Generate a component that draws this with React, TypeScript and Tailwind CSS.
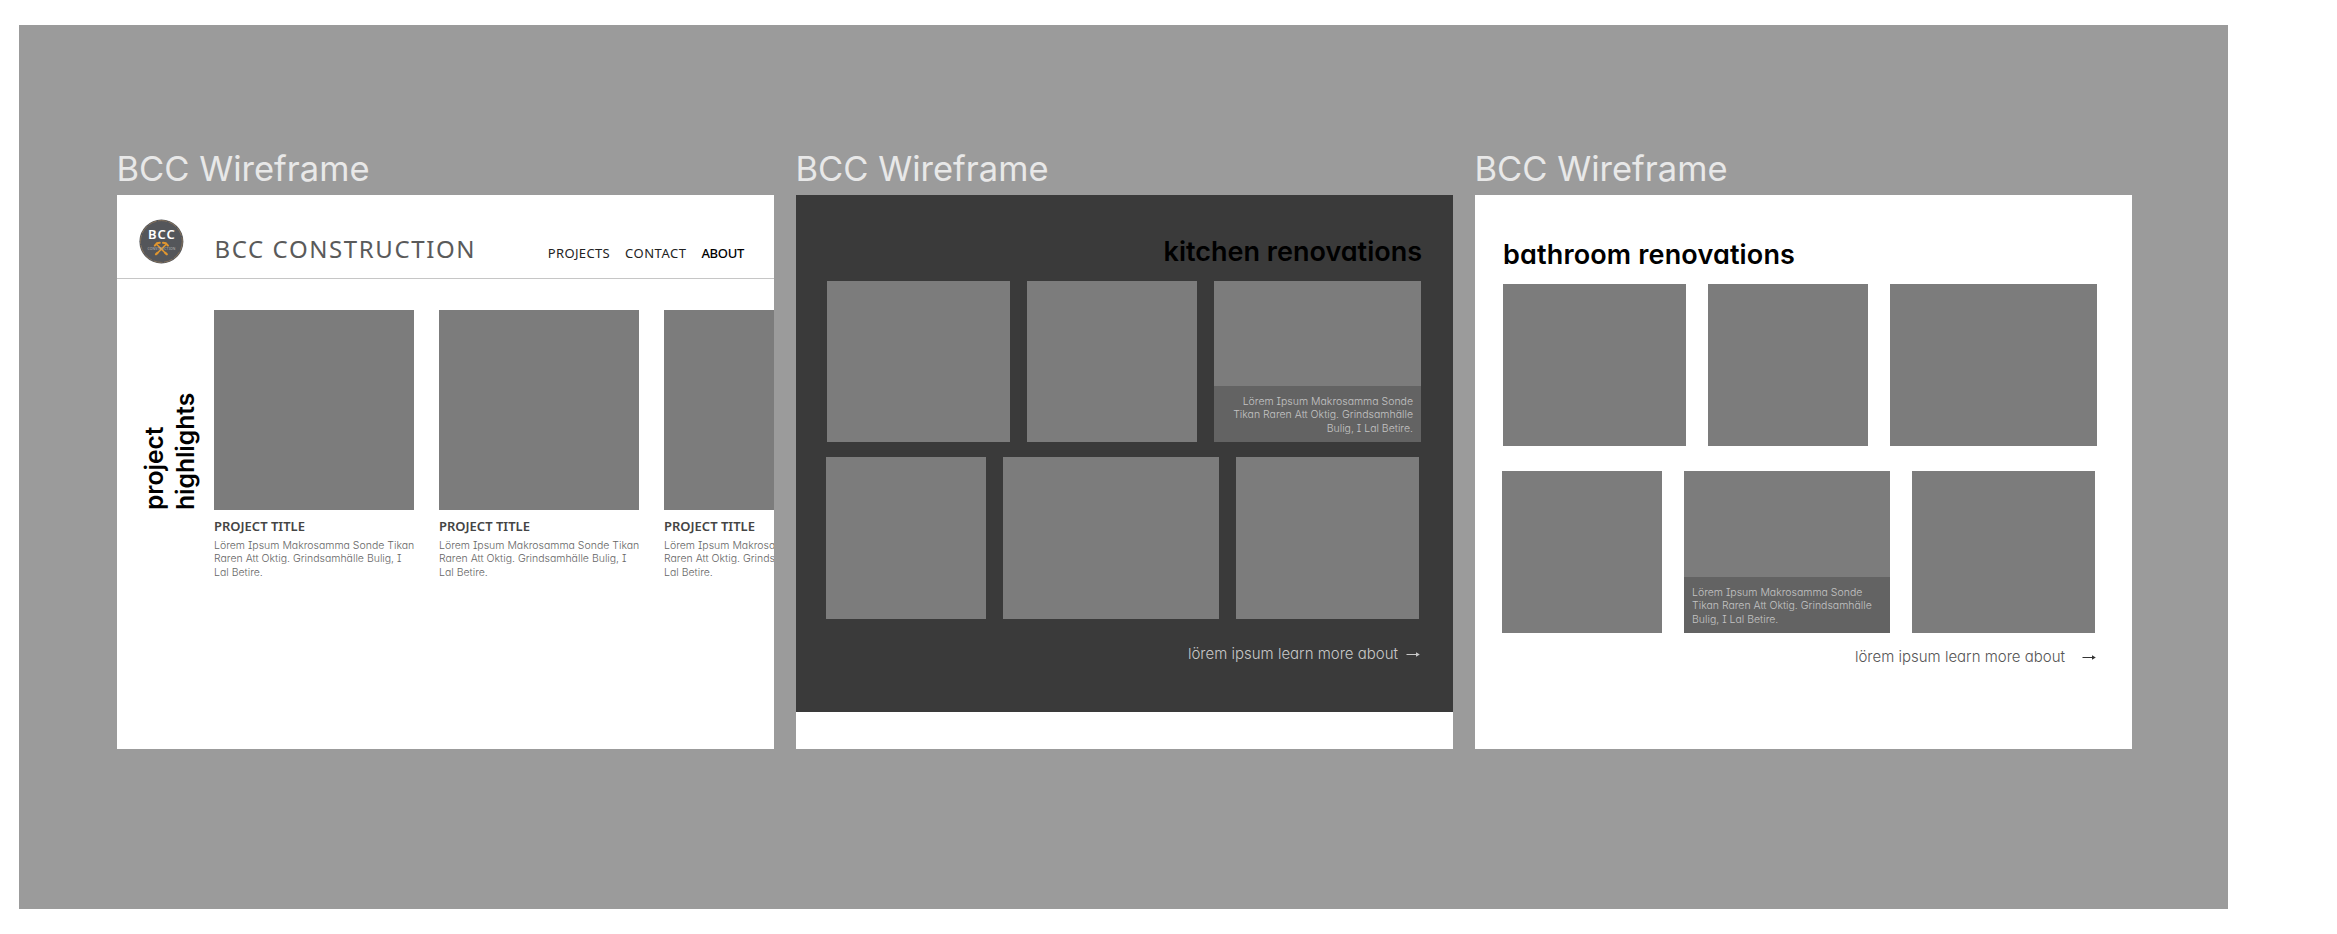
import type { ReactNode } from "react";

const LEXEND = "font-['Inter',sans-serif] [font-feature-settings:'cv11','cv08']";
const BODY = `${LEXEND} text-[10.5px] leading-[13.3px] font-light`;

function Frame({ children }: { children: ReactNode }) {
  return (
    <section className="flex w-[657px] flex-col">
      <h2 className="-ml-[0.5px] h-12 font-['Inter',sans-serif] text-[34.5px] leading-[44px] whitespace-nowrap text-[#e8e8e8]">
        BCC Wireframe
      </h2>
      <div className="flex h-[554px] flex-col overflow-hidden bg-white">{children}</div>
    </section>
  );
}

function Logo() {
  return (
    <svg className="mt-6 ml-[22px] h-[45px] w-[45px] shrink-0" viewBox="0 0 45 45">
      <circle cx="22.4" cy="22.5" r="22" fill="#54565a" />
      <circle cx="22.4" cy="22.5" r="20.9" fill="none" stroke="#86725a" strokeWidth="1" strokeDasharray="9 1.5" />
      <text x="22.4" y="20" textAnchor="middle" textLength="27" fill="#fff" className="font-['Noto_Sans',sans-serif] text-[13px] font-semibold">
        BCC
      </text>
      <g stroke="#e0962f" strokeLinecap="round" fill="none">
        <path d="M18 34.5 27 25.5M26.8 34.5 17.8 25.5" strokeWidth="1.7" />
        <path d="M15.8 26.6 18 24.2 20.8 23.8M29 26.6 26.8 24.2 24 23.8" strokeWidth="2" />
        <path d="M17 35.3 18.6 33.8M27.8 35.3 26.2 33.8" strokeWidth="2.2" />
      </g>
      <text x="22.4" y="31.3" textAnchor="middle" textLength="28" fill="#b9b9b9" className="font-['Noto_Sans',sans-serif] text-[3.4px]">
        CONSTRUCTION
      </text>
    </svg>
  );
}

function Header() {
  return (
    <header className="flex h-[84px] shrink-0 border-b border-[#c6c6c6]">
      <Logo />
      <h1 className="mt-[38px] ml-[30.5px] font-['Noto_Sans',sans-serif] text-[24px] leading-8 tracking-[1.6px] whitespace-nowrap text-[#5a5a5a]">
        BCC CONSTRUCTION
      </h1>
      <nav className="mt-12 mr-[30px] ml-auto flex gap-[15px] font-['Noto_Sans',sans-serif] text-[13px] leading-5 text-[#222]">
        <span className="tracking-[0.35px]">PROJECTS</span>
        <span className="tracking-[0.5px]">CONTACT</span>
        <span className="font-medium tracking-[-0.3px] text-black">ABOUT</span>
      </nav>
    </header>
  );
}

function Project() {
  return (
    <article className="w-[200px] shrink-0">
      <div className="h-[200px] bg-[#7c7c7c]" />
      <h4 className="mt-1.5 font-['Noto_Sans',sans-serif] text-[13px] leading-5 font-semibold text-[#444]">PROJECT TITLE</h4>
      <p className={`${BODY} mt-[3px] whitespace-nowrap text-[#666]`}>
        Lörem Ipsum Makrosamma Sonde Tikan
        <br />
        Raren Att Oktig. Grindsamhälle Bulig, I
        <br />
        Lal Betire.
      </p>
    </article>
  );
}

function Caption({ className }: { className: string }) {
  return (
    <p className={`${BODY} h-14 bg-[#636363] pt-[9px] whitespace-nowrap text-[#c4c4c4] ${className}`}>
      Lörem Ipsum Makrosamma Sonde
      <br />
      Tikan Raren Att Oktig. Grindsamhälle
      <br />
      Bulig, I Lal Betire.
    </p>
  );
}

function Tile({ className, children }: { className: string; children?: ReactNode }) {
  return <div className={`flex shrink-0 flex-col justify-end bg-[#7c7c7c] ${className}`}>{children}</div>;
}

function Arrow({ className }: { className: string }) {
  return (
    <svg className={`h-2 w-[14px] ${className}`} viewBox="0 0 14 8" fill="none" stroke="currentColor">
      <path d="M0.5 4.5H12.5" />
      <path d="M10 2.2 13.8 4.5 10 6.8Z" fill="currentColor" stroke="none" />
    </svg>
  );
}

export default function App() {
  return (
    <div className="h-[934px] overflow-hidden bg-white pt-[25px] pl-[19px]">
      <main className="flex h-[884px] w-[2209px] gap-[22px] bg-[#9b9b9b] pt-[122px] pl-[98px]">
        <Frame>
          <Header />
          <div className="flex pt-[31px]">
            <div className="flex h-[200px] w-[97px] shrink-0 justify-end pr-[14px]">
              <h3 className={`${LEXEND} rotate-180 text-[24.6px] leading-[30.5px] font-semibold whitespace-nowrap text-black [writing-mode:vertical-rl]`}>
                project
                <br />
                highlights
              </h3>
            </div>
            <div className="flex gap-[25px]">
              <Project />
              <Project />
              <Project />
            </div>
          </div>
        </Frame>

        <Frame>
          <div className="h-[517px] bg-[#3a3a3a] pt-[38px] pr-[33px] pl-[30px]">
            <h3 className={`${LEXEND} -mr-0.5 h-12 text-right text-[27px] leading-[37px] font-semibold whitespace-nowrap text-black`}>
              kitchen renovations
            </h3>
            <div className="flex h-[161px] gap-[17px] pl-px">
              <Tile className="w-[183px]" />
              <Tile className="w-[170px]" />
              <Tile className="w-[207px]">
                <Caption className="pr-2 text-right" />
              </Tile>
            </div>
            <div className="mt-[15px] flex h-[162px] gap-[17px]">
              <Tile className="w-[160px]" />
              <Tile className="w-[216px]" />
              <Tile className="w-[183px]" />
            </div>
            <div className="mt-[23px] flex items-center justify-end text-[#c8c8c8]">
              <span className={`${LEXEND} text-[15px] leading-6 font-light`}>lörem ipsum learn more about</span>
              <Arrow className="ml-[8px]" />
            </div>
          </div>
        </Frame>

        <Frame>
          <div className="pt-[41px] pr-[35px] pl-[27px]">
            <h3 className={`${LEXEND} h-12 pl-px text-[27px] leading-[37px] font-semibold tracking-[0.15px] whitespace-nowrap text-black`}>
              bathroom renovations
            </h3>
            <div className="flex h-[162px] gap-[22px] pl-px">
              <Tile className="w-[183px]" />
              <Tile className="w-[160px]" />
              <Tile className="w-[207px]" />
            </div>
            <div className="mt-[25px] flex h-[162px] gap-[22px]">
              <Tile className="w-[160px]" />
              <Tile className="w-[206px]">
                <Caption className="pl-2" />
              </Tile>
              <Tile className="w-[183px]" />
            </div>
            <div className="mt-3 flex items-center justify-end pr-px text-[#555]">
              <span className={`${LEXEND} text-[15px] leading-6 font-light`}>lörem ipsum learn more about</span>
              <Arrow className="ml-[17px] text-[#333]" />
            </div>
          </div>
        </Frame>
      </main>
    </div>
  );
}
